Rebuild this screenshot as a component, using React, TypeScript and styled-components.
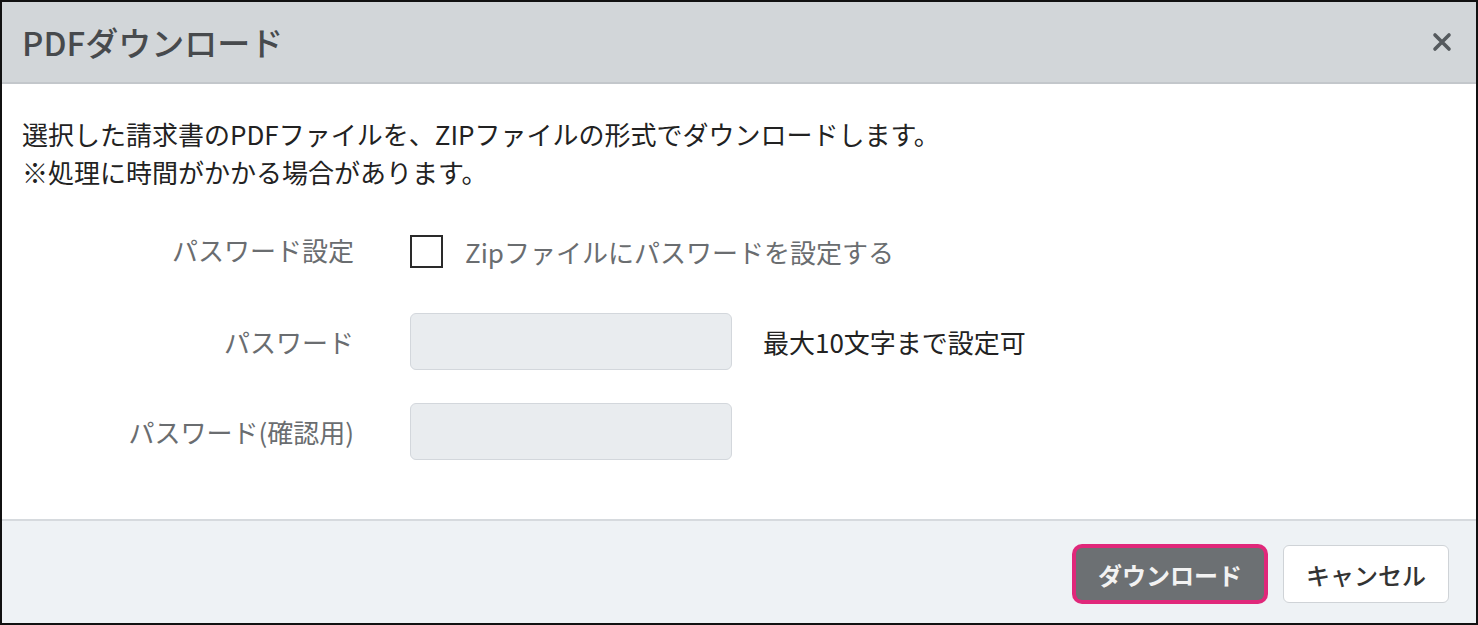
import styled, { createGlobalStyle } from "styled-components";

const GlobalStyle = createGlobalStyle`
  html, body {
    margin: 0;
    padding: 0;
    background: #ffffff;
  }
  body {
    font-family: "Noto Sans CJK JP", "Noto Sans", sans-serif;
  }
  * {
    box-sizing: border-box;
  }
`;

const Frame = styled.div`
  width: 1478px;
  height: 625px;
  border: 2px solid #111;
  display: flex;
  flex-direction: column;
  background: #fff;
  overflow: hidden;
`;

const Header = styled.div`
  height: 82px;
  flex: none;
  background: #d2d6d9;
  border-bottom: 2px solid #c3c7cb;
  display: flex;
  align-items: center;
  justify-content: space-between;
  padding: 0 22px 0 20px;
`;

const Title = styled.h1`
  margin: 0;
  font-size: 33px;
  font-weight: 500;
  color: #474a4d;
`;

const CloseButton = styled.button`
  border: 0;
  background: transparent;
  padding: 0;
  width: 24px;
  height: 24px;
  display: flex;
  align-items: center;
  justify-content: center;
  cursor: pointer;
`;

const Body = styled.div`
  flex: 1;
  padding: 31px 20px 0 20px;
`;

const Intro = styled.p`
  margin: 0;
  font-size: 26px;
  line-height: 38px;
  color: #222;
`;

const Form = styled.div`
  margin-top: 28px;
  display: grid;
  grid-template-columns: 332px auto;
  column-gap: 56px;
  row-gap: 33px;
  align-items: center;
`;

const Label = styled.div`
  text-align: right;
  font-size: 26px;
  color: #6a6d70;
`;

const Field = styled.div`
  display: flex;
  align-items: center;
`;

const CheckLabel = styled.label`
  display: flex;
  align-items: center;
  gap: 22px;
  font-size: 26px;
  color: #6a6d70;
  height: 61px;
  padding-top: 4px;
`;

const CheckBox = styled.span`
  width: 33px;
  height: 33px;
  border: 2px solid #2a2a2a;
  background: #fff;
`;

const Input = styled.div`
  width: 322px;
  height: 57px;
  background: #e9ecef;
  border: 1.5px solid #d3d7dc;
  border-radius: 6px;
`;

const Hint = styled.span`
  margin-left: 31px;
  font-size: 26px;
  color: #222;
`;

const Footer = styled.div`
  height: 104px;
  flex: none;
  background: #eef2f5;
  border-top: 2px solid #d6dade;
  display: flex;
  align-items: center;
  justify-content: flex-end;
  gap: 15px;
  padding: 4px 27px 0 0;
`;

const Button = styled.button<{ $primary?: boolean }>`
  font-family: inherit;
  font-size: 24px;
  height: ${(p) => (p.$primary ? "52px" : "58px")};
  padding: 0 22px;
  border-radius: 6px;
  cursor: pointer;
  font-weight: ${(p) => (p.$primary ? 700 : 500)};
  color: ${(p) => (p.$primary ? "#f2f2f2" : "#333")};
  background: ${(p) => (p.$primary ? "#6c7073" : "#fff")};
  border: ${(p) => (p.$primary ? "0" : "1.5px solid #cfd3d7")};
  box-shadow: ${(p) => (p.$primary ? "0 0 0 4px #e0287a" : "none")};
  margin-right: ${(p) => (p.$primary ? "4px" : "0")};
`;

export default function App() {
  return (
    <>
      <GlobalStyle />
      <Frame>
        <Header>
          <Title>PDFダウンロード</Title>
          <CloseButton aria-label="閉じる">
            <svg width="20" height="20" viewBox="0 0 20 20">
              <path d="M3 3 L17 17 M17 3 L3 17" stroke="#555a5e" strokeWidth="3.6" strokeLinecap="round" />
            </svg>
          </CloseButton>
        </Header>
        <Body>
          <Intro>
            選択した請求書のPDFファイルを、ZIPファイルの形式でダウンロードします。
            <br />
            ※処理に時間がかかる場合があります。
          </Intro>
          <Form>
            <Label>パスワード設定</Label>
            <Field>
              <CheckLabel>
                <CheckBox />
                Zipファイルにパスワードを設定する
              </CheckLabel>
            </Field>
            <Label>パスワード</Label>
            <Field>
              <Input />
              <Hint>最大10文字まで設定可</Hint>
            </Field>
            <Label>パスワード(確認用)</Label>
            <Field>
              <Input />
            </Field>
          </Form>
        </Body>
        <Footer>
          <Button $primary>ダウンロード</Button>
          <Button>キャンセル</Button>
        </Footer>
      </Frame>
    </>
  );
}
